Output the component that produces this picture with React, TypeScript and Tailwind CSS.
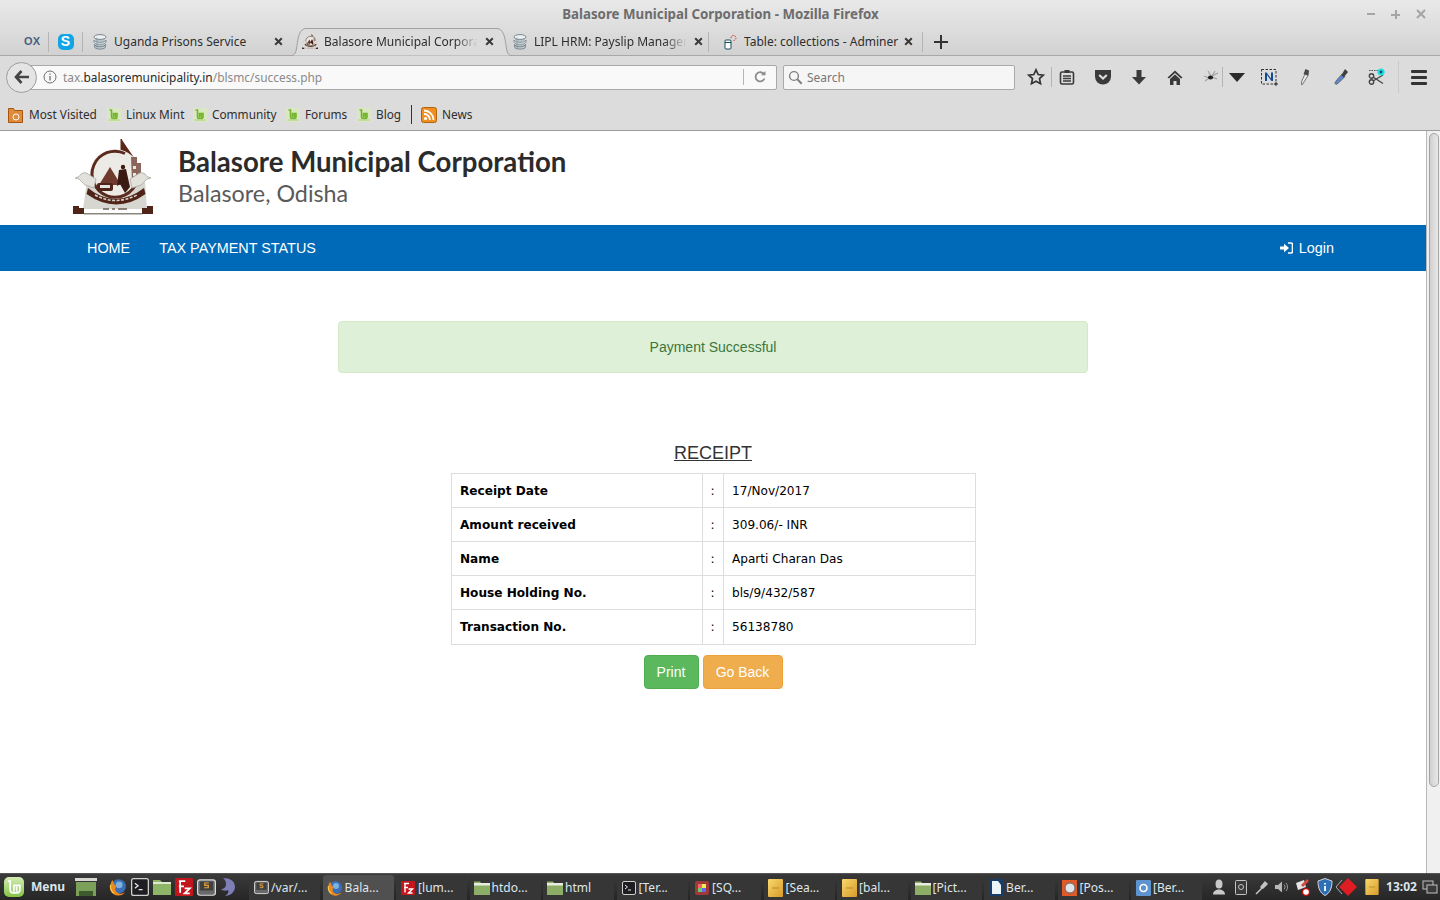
import React from "react";

const chrome = "font-['Noto_Sans',sans-serif]";
const arial = "font-['Liberation_Sans',Arial,sans-serif]";
const dejavu = "font-['DejaVu_Sans',sans-serif]";

const GlobeDb = () => (
  <svg width="16" height="16" viewBox="0 0 16 16">
    <path d="M3 3v10c0 1.200 2.200 2.200 5 2.200s5-1 5-2.200V3" fill="#b9c4ca" />
    <ellipse cx="8" cy="3" rx="6" ry="2.400" fill="#eef1f2" stroke="#77858c" />
    <path d="M2 6c0 1.300 2.700 2.400 6 2.400S14 7.300 14 6v2c0 1.300-2.700 2.400-6 2.400S2 9.300 2 8z" fill="#dce2e5" stroke="#77858c" strokeWidth=".8" />
    <path d="M2.500 10.500c0 1.300 2.500 2.300 5.500 2.300s5.500-1 5.500-2.300v2.300c0 1.300-2.500 2.300-5.500 2.300s-5.500-1-5.500-2.300z" fill="#c5ced3" stroke="#66757f" strokeWidth=".8" />
    <path d="M5 3.500v11" stroke="#5f7a8a" strokeWidth=".7" opacity=".6" />
  </svg>
);

const Crest = ({ size = 16 }: { size?: number }) => (
  <svg width={size} height={size * 0.95} viewBox="0 0 80 76" className="shrink-0">
    {/* body */}
    <path d="M14 42h58l2 28H10z" fill="#d8d6d1" />
    {/* flag */}
    <rect x="47.500" y="0" width="1.600" height="32" fill="#5a2a1e" />
    <path d="M49 1l15 22-15-6z" fill="#5b2418" />
    {/* disc */}
    <circle cx="42" cy="35" r="25" fill="#ecebe6" />
    <path d="M52 14.500A23 23 0 1 0 64 42" fill="none" stroke="#5b2a1f" strokeWidth="3" />
    <circle cx="42" cy="35" r="18" fill="none" stroke="#e9e8e3" strokeWidth="1.500" />
    <path d="M26 46l11-18 11 18z" fill="#6e3b2e" />
    <rect x="24" y="44" width="16" height="8" rx="2" fill="#4f2419" />
    <path d="M27 46h10v3H27z" fill="#e6e4de" />
    <circle cx="50" cy="28" r="2.200" fill="#3a1a12" />
    <path d="M46 31l7-1 4 18-5 6-5-9-3 2z" fill="#3a1a12" />
    <path d="M58 18h6v6h4v20h-9z" fill="#8a675c" />
    <path d="M60 27h3v3h-3zM60 34h3v3h-3z" fill="#e8e6e0" />
    {/* birds */}
    <path d="M2 39q5-1 6-4 4-3 7 0l8 5-2 9-9-3q-4-4-6-6z" fill="#e2e1da" stroke="#a9a79c" strokeWidth=".8" />
    <path d="M78 39q-5-1-6-4-4-3-7 0l-8 5 2 9 9-3q4-4 6-6z" fill="#e2e1da" stroke="#a9a79c" strokeWidth=".8" />
    {/* ribbon */}
    <path d="M15 49q27 22 56 0l1.500 6q-29 21-59 0z" fill="#4f2419" />
    <path d="M22 56q20 11 42 0" fill="none" stroke="#d8cfc8" strokeWidth="1.600" strokeDasharray="3 1.500" />
    {/* motto + base */}
    <path d="M30 70h6M39 70h3M45 70h9" stroke="#6b5d55" strokeWidth="1.600" />
    <path d="M0 67h6v2h5v6H0z" fill="#4f2419" />
    <path d="M80 67h-6v2h-5v6h11z" fill="#4f2419" />
    <rect x="11" y="74" width="58" height="1.500" fill="#8b8680" />
  </svg>
);

const CloseX = () => (
  <svg width="9" height="9" viewBox="0 0 9 9" className="shrink-0">
    <path d="M1.200 1.200l6.600 6.600M7.800 1.200L1.200 7.800" stroke="#3a3a3a" strokeWidth="2" />
  </svg>
);

const Sep = ({ h = "h-[20px]" }: { h?: string }) => <div className={`w-px shrink-0 bg-[#b4b4b4] ${h}`} />;

const Tab = ({ icon, title, fade, w, pl, pr = "" }: { icon: React.ReactNode; title: string; fade?: boolean; w: string; pl: string; pr?: string }) => (
  <div className={`flex h-full shrink-0 items-center ${w} ${pl} ${pr}`}>
    <div className="mr-[6px] flex w-4 shrink-0 justify-center">{icon}</div>
    <div
      className={`min-w-0 flex-1 overflow-hidden whitespace-nowrap pt-[1px] text-[12px] text-[#2e2e2e] ${fade ? "[mask-image:linear-gradient(90deg,black_85%,transparent)]" : ""}`}
    >
      {title}
    </div>
  </div>
);

const MintIcon = ({ size = 14 }: { size?: number }) => (
  <svg width={size} height={size} viewBox="0 0 14 14">
    <rect width="14" height="14" rx="1" fill="#d9e8c2" />
    <path d="M2.500 2h2v7a1.500 1.500 0 0 0 1.500 1.500h2.500A1.500 1.500 0 0 0 10 9V5.500H6.500v4M8.300 6v3.500" fill="none" stroke="#73b52a" strokeWidth="1.600" />
    <rect x="1.500" y="11.500" width="11" height="1" fill="#a9cf74" />
  </svg>
);

const Mark = ({ w, icon, label, gap = "gap-[5px]" }: { w: string; icon: React.ReactNode; label: string; gap?: string }) => (
  <div className={`flex shrink-0 items-center ${gap} ${w}`}>
    {icon}
    <span className="whitespace-nowrap text-[11.800px] text-[#2e2e2e]">{label}</span>
  </div>
);

const ToolIcon = ({ children }: { children: React.ReactNode }) => (
  <div className="flex h-[20px] w-[36px] shrink-0 items-center justify-center">{children}</div>
);

const FolderIcon = () => (
  <svg width="16" height="15" viewBox="0 0 16 15">
    <path d="M0 1.500h6l1 1.500h9v12H0z" fill="#8cae66" />
    <rect y="3" width="16" height="2.500" fill="#e8ecdf" />
  </svg>
);

const StickyIcon = ({ w = 15, h = 18 }: { w?: number; h?: number }) => (
  <svg width={w} height={h} viewBox="0 0 15 18">
    <defs>
      <linearGradient id="stk" x1="0" y1="0" x2="1" y2="1">
        <stop offset="0" stopColor="#f9d96b" />
        <stop offset="1" stopColor="#d99a2b" />
      </linearGradient>
    </defs>
    <rect width="15" height="18" rx="1" fill="url(#stk)" />
    <path d="M4 9h7" stroke="#a8822a" strokeWidth=".8" />
  </svg>
);

const FoxIcon = ({ size = 16 }: { size?: number }) => (
  <svg width={size} height={size} viewBox="0 0 16 16">
    <circle cx="8.500" cy="7.500" r="6.500" fill="#3a6fb7" />
    <circle cx="9" cy="6" r="3" fill="#7fb1e0" />
    <path d="M3 1.500C1 5 0 10 3 13.500c3 3 9 3 11.500-1-2 1.500-5 2-7 .5C5 11.500 5 8.500 7 7.500 5.500 7 4 5 3 1.500z" fill="#ea8a1f" />
    <path d="M1.500 6c-.5 3 .5 6 3 7.500" fill="none" stroke="#f7c547" strokeWidth="1.200" />
  </svg>
);

const TermIcon = ({ size = 14 }: { size?: number }) => (
  <svg width={size} height={size} viewBox="0 0 14 14">
    <rect x=".5" y=".5" width="13" height="13" rx="1.500" fill="#1d1d22" stroke="#cfcfcf" />
    <path d="M3 4l2.500 2L3 8M6 9h3" stroke="#e8e8e8" fill="none" />
  </svg>
);

const FzIcon = ({ size = 14 }: { size?: number }) => (
  <svg width={size} height={size} viewBox="0 0 14 14">
    <rect width="14" height="14" rx="1" fill="#c1161c" />
    <path d="M3 2.500h5M4 2.500v9M3 6.500h4M7.500 8h4L7.500 12h4" stroke="#fff" strokeWidth="1.400" fill="none" />
  </svg>
);

const SublimeIcon = ({ size = 16 }: { size?: number }) => (
  <svg width={size} height={size} viewBox="0 0 16 16">
    <rect x=".5" y="1.500" width="15" height="13" rx="2" fill="#6a6a6a" stroke="#dcdcdc" />
    <rect x="2.500" y="3" width="11" height="7.500" fill="#404040" />
    <path d="M10 4.200H6.500v2H9.500v2H6" stroke="#e9a23b" fill="none" />
  </svg>
);

const TaskBtn = ({ icon, label, active }: { icon: React.ReactNode; label: string; active?: boolean }) => (
  <div
    className={`flex h-[25px] w-[71px] shrink-0 items-center gap-[2px] rounded-t-[3px] pl-[4px] ${active ? "bg-[#505050]" : "bg-[#363636]"}`}
  >
    <div className="flex w-[16px] shrink-0 justify-center">{icon}</div>
    <span className="whitespace-nowrap text-[12px] text-[#dfe6ec]">{label}</span>
  </div>
);

const rows = [
  ["Receipt Date", "17/Nov/2017"],
  ["Amount received", "309.06/- INR"],
  ["Name", "Aparti Charan Das"],
  ["House Holding No.", "bls/9/432/587"],
  ["Transaction No.", "56138780"],
];

export default function App() {
  return (
    <div className={`flex h-[900px] w-[1440px] flex-col overflow-hidden bg-white ${chrome}`}>
      {/* titlebar + tabs */}
      <div className="h-[56px] shrink-0 border-b border-[#a8a8a8] bg-gradient-to-b from-[#e9e9e9] to-[#d2d2d2]">
        <div className="flex h-[28px] items-center pr-[14px]">
          <div className="w-[1361px] pl-[80px] pt-[2px] text-center text-[13.300px] font-bold text-[#6d6d6d]">Balasore Municipal Corporation - Mozilla Firefox</div>
          <div className="flex flex-1 items-center justify-between pl-[6px]">
            <div className="h-[2px] w-[8px] bg-[#a5a5a5]" />
            <div className="relative h-[9px] w-[9px]">
              <div className="absolute top-[4px] h-[2px] w-[9px] bg-[#a5a5a5]" />
              <div className="absolute left-[4px] h-[9px] w-[2px] bg-[#a5a5a5]" />
            </div>
            <svg width="10" height="10" viewBox="0 0 10 10">
              <path d="M1 1l8 8M9 1l-8 8" stroke="#a5a5a5" strokeWidth="2" />
            </svg>
          </div>
        </div>
        <div className="flex h-[27px] items-center">
          <div className={`flex w-[48px] shrink-0 justify-end pr-[8px] ${arial} text-[11px] font-bold text-[#46617f]`}>OX</div>
          <Sep />
          <div className="flex w-[33px] shrink-0 justify-center">
            <div className={`flex h-[16px] w-[16px] items-center justify-center rounded-[5px] bg-[#12a5e6] ${arial} text-[14px] font-bold text-white`}>S</div>
          </div>
          <Sep />
          <div className="flex h-full w-[208px] shrink-0 items-center">
            <Tab icon={<GlobeDb />} title="Uganda Prisons Service" w="w-[191px]" pl="pl-[9px]" />
            <CloseX />
          </div>
          <div className="relative flex h-full w-[214px] shrink-0 items-center">
            <svg className="absolute left-0 -top-[1px]" width="221" height="29" viewBox="0 0 221 29">
              <path d="M0 28.500c4 0 5-3 6-10 1-9 3-17 9-17h191c6 0 8 8 9 17 1 7 2 10 6 10" fill="#dcdcdc" stroke="#a0a0a0" />
            </svg>
            <div className="relative flex h-full w-full items-center">
              <Tab icon={<Crest />} title="Balasore Municipal Corporation" fade w="w-[194px]" pl="pl-[11px]" pr="pr-[7px]" />
              <CloseX />
            </div>
          </div>
          <div className="relative flex h-full w-[203px] shrink-0 items-center">
            <Tab icon={<GlobeDb />} title="LIPL HRM: Payslip Management" fade w="w-[189px]" pl="pl-[7px]" pr="pr-[7px]" />
            <CloseX />
          </div>
          <Sep />
          <div className="flex h-full w-[213px] shrink-0 items-center">
            <Tab
              icon={
                <svg width="16" height="16" viewBox="0 0 16 16">
                  <rect x="3" y="6" width="6" height="9" rx="1" fill="#fff" stroke="#164f5a" />
                  <path d="M3 8.500h6" stroke="#164f5a" />
                  <path d="M9 4a2.500 2.500 0 1 1 5 0c0 1.500-2 1.500-2 3" fill="none" stroke="#d22" strokeDasharray="1.500 1" />
                </svg>
              }
              title="Table: collections - Adminer"
              w="w-[195px]"
              pl="pl-[13px]"
            />
            <CloseX />
          </div>
          <Sep />
          <div className="relative ml-[11px] h-[14px] w-[14px]">
            <div className="absolute top-[6px] h-[2px] w-[14px] bg-[#333]" />
            <div className="absolute left-[6px] h-[14px] w-[2px] bg-[#333]" />
          </div>
        </div>
      </div>

      {/* nav + bookmarks */}
      <div className="h-[75px] shrink-0 border-b border-[#9c9c9c] bg-[#dcdcdc]">
        <div className="flex h-[39px] items-center pt-[3px]">
          <div className="relative ml-[22px] flex h-[25px] w-[755px] shrink-0 items-center rounded-r-[2px] border border-[#a9a9a9] bg-[#f9f9f9] pl-[20px] pr-[9px]">
            <div className="absolute left-[-17px] top-[-4px] flex h-[31px] w-[31px] items-center justify-center rounded-full border border-[#9e9e9e] bg-[#e4e4e4]">
              <svg width="16" height="14" viewBox="0 0 16 14">
                <path d="M7.500 1L2 7l5.500 6M2.500 7H15" stroke="#444" strokeWidth="2.600" fill="none" />
              </svg>
            </div>
            <svg width="14" height="14" viewBox="0 0 14 14" className="mr-[6px] shrink-0">
              <circle cx="7" cy="7" r="6" fill="none" stroke="#707070" />
              <path d="M7 6v4.500M7 3.400v1.400" stroke="#707070" strokeWidth="1.300" />
            </svg>
            <span className="flex-1 whitespace-nowrap pt-[1px] text-[11.900px] text-[#8a8a8a]">
              tax.<span className="text-[#2a2a2a]">balasoremunicipality.in</span>/blsmc/success.php
            </span>
            <div className="h-[16px] w-px bg-[#b5b5b5]" />
            <svg width="14" height="14" viewBox="0 0 14 14" className="ml-[9px]">
              <path d="M11 4.200A4.600 4.600 0 1 0 11.500 8.500" fill="none" stroke="#8c8c8c" strokeWidth="1.800" />
              <path d="M8 5.200h4.500V1z" fill="#8c8c8c" />
            </svg>
          </div>
          <div className="ml-[6px] flex h-[25px] w-[232px] shrink-0 items-center gap-[4px] rounded-[2px] border border-[#a9a9a9] bg-[#f6f6f6] pl-[4px]">
            <svg width="15" height="15" viewBox="0 0 15 15">
              <circle cx="6" cy="6" r="4.400" fill="none" stroke="#7f7f7f" strokeWidth="1.400" />
              <path d="M9.300 9.300l4.400 4.400" stroke="#7f7f7f" strokeWidth="2" />
            </svg>
            <span className="pt-[1px] text-[12px] text-[#777]">Search</span>
          </div>
          <div className="ml-[3px] flex h-[36px] items-center">
            <ToolIcon>
              <svg width="18" height="18" viewBox="0 0 18 18">
                <path d="M9 1.800l2.200 4.700 5.100.6-3.800 3.500 1 5.100L9 13.200l-4.500 2.500 1-5.100-3.800-3.500 5.100-.6z" fill="none" stroke="#333" strokeWidth="1.700" />
              </svg>
            </ToolIcon>
            <div className="-ml-[3px] mr-[-3px]"><Sep /></div>
            <ToolIcon>
              <svg width="16" height="16" viewBox="0 0 16 16">
                <rect x="1.500" y="3" width="13" height="12" rx="1.500" fill="none" stroke="#3a3a3a" strokeWidth="1.600" />
                <rect x="5.500" y="1" width="5" height="3" fill="#3a3a3a" />
                <path d="M4 7h8M4 9.500h8M4 12h8" stroke="#3a3a3a" strokeWidth="1.400" />
              </svg>
            </ToolIcon>
            <ToolIcon>
              <svg width="18" height="16" viewBox="0 0 18 16">
                <path d="M1 1h16v6.500a8 8 0 0 1-16 0z" fill="#3a3a3a" />
                <path d="M5.200 6L9 9.600 12.800 6" fill="none" stroke="#dcdcdc" strokeWidth="2.200" />
              </svg>
            </ToolIcon>
            <ToolIcon>
              <svg width="16" height="16" viewBox="0 0 16 16">
                <path d="M5.500 1h5v7H15l-7 7.500L1 8h4.500z" fill="#3a3a3a" />
              </svg>
            </ToolIcon>
            <ToolIcon>
              <svg width="16" height="15" viewBox="0 0 16 15">
                <path d="M8 .5L.5 7.500 2 8.600 8 3l6 5.600 1.500-1.100z" fill="#3a3a3a" />
                <path d="M3 9l5-4.500L13 9v6H9.500v-4h-3v4H3z" fill="#3a3a3a" />
              </svg>
            </ToolIcon>
            <ToolIcon>
              <svg width="16" height="14" viewBox="0 0 16 14">
                <path d="M1 6l5 2M2 11l4-3M15 3L9 6M14 9L9 7M5 1l3 5M12 1L9 6" stroke="#a2a2a2" strokeWidth="1.100" />
                <ellipse cx="7.500" cy="7.500" rx="2.600" ry="2" fill="#222" />
              </svg>
            </ToolIcon>
            <div className="-ml-[7px]"><Sep /></div>
            <div className="flex w-[28px] shrink-0 justify-center">
              <svg width="16" height="9" viewBox="0 0 16 9">
                <path d="M0 0h16L8 9z" fill="#2b2b2b" />
              </svg>
            </div>
            <ToolIcon>
              <svg width="17" height="17" viewBox="0 0 17 17">
                <rect x=".5" y=".5" width="14.500" height="14.500" fill="none" stroke="#333" strokeDasharray="2.500 1.500" />
                <path d="M4 12V3.500h1.600L10 9.500V3.500h2V12h-1.600L6 6v6z" fill="#124a94" />
                <path d="M13 15h4M15 13v4" stroke="#333" />
              </svg>
            </ToolIcon>
            <ToolIcon>
              <svg width="14" height="18" viewBox="0 0 14 18">
                <path d="M7 6l3 1.500-4 6.500-2 3-.5-.3.2-3.500z" fill="#e9e9e9" stroke="#777" />
                <path d="M5.500 6L7.500 1l3.500 1.500-.5 5z" fill="#4a4a4a" />
              </svg>
            </ToolIcon>
            <ToolIcon>
              <svg width="16" height="18" viewBox="0 0 16 18">
                <path d="M9 6l3 2.500-6 6L3 16.500l-1.200-1.200L3 13z" fill="#5a86d6" stroke="#6b6b6b" />
                <path d="M8.500 7l3.500-6 3 3-4.500 5.500z" fill="#3f3f3f" />
              </svg>
            </ToolIcon>
            <ToolIcon>
              <svg width="18" height="18" viewBox="0 0 18 18">
                <circle cx="3.500" cy="14" r="2.200" fill="none" stroke="#444" strokeWidth="1.400" />
                <circle cx="3.500" cy="8" r="2.200" fill="none" stroke="#444" strokeWidth="1.400" />
                <path d="M5 13L15 7M5 9l10 6.500" stroke="#444" strokeWidth="1.300" />
                <path d="M1 2.500h9" stroke="#555" strokeDasharray="1.500 1" />
                <circle cx="13" cy="4" r="3.600" fill="#20e0e6" />
                <circle cx="13" cy="4" r="1.400" fill="#1b4a6b" />
              </svg>
            </ToolIcon>
            <div className="ml-[3px] h-[32px] w-px bg-[#cacaca]" />
            <div className="ml-[12px] flex w-[16px] flex-col gap-[3px]">
              <div className="h-[3px] rounded-[1px] bg-[#333]" />
              <div className="h-[3px] rounded-[1px] bg-[#333]" />
              <div className="h-[3px] rounded-[1px] bg-[#333]" />
            </div>
          </div>
        </div>
        <div className="flex h-[35px] items-center pl-[8px] pt-[4px]">
          <Mark
            w="w-[99px]"
            gap="gap-[6px]"
            icon={
              <svg width="15" height="16" viewBox="0 0 15 16">
                <path d="M.5 1.500h5l1 2h8v12H.5z" fill="#e08a3c" stroke="#a8560f" />
                <circle cx="8" cy="10" r="3" fill="none" stroke="#fff" />
              </svg>
            }
            label="Most Visited"
          />
          <Mark w="w-[86px]" icon={<MintIcon />} label="Linux Mint" />
          <Mark w="w-[93px]" icon={<MintIcon />} label="Community" />
          <Mark w="w-[71px]" icon={<MintIcon />} label="Forums" />
          <Mark w="w-[54px]" icon={<MintIcon />} label="Blog" />
          <div className="h-[19px] w-px bg-[#333]" />
          <div className="ml-[9px]">
            <Mark
              w="w-[60px]"
              icon={
                <svg width="16" height="16" viewBox="0 0 16 16">
                  <rect x=".5" y=".5" width="15" height="15" rx="2" fill="#ee8f22" stroke="#b4620e" />
                  <circle cx="4.500" cy="11.500" r="1.600" fill="#fff" />
                  <path d="M3 7a6 6 0 0 1 6 6M3 3.500A9.500 9.500 0 0 1 12.500 13" fill="none" stroke="#fff" strokeWidth="1.800" />
                </svg>
              }
              label="News"
            />
          </div>
        </div>
      </div>

      {/* page */}
      <div className="flex min-h-0 flex-1">
        <div className={`min-w-0 flex-1 ${arial}`}>
          <div className="flex h-[94px] items-start pl-[73px] pt-[8px]">
            <Crest size={80} />
            <div className="ml-[25px] font-['Lato',sans-serif]">
              <div className="mt-[5px] text-[27.600px] font-bold leading-[35px] text-[#2b2b2b]">Balasore Municipal Corporation</div>
              <div className="text-[23.300px] leading-[28px] text-[#5a5a5a]">Balasore, Odisha</div>
            </div>
          </div>
          <div className="flex h-[46px] items-center bg-[#0069b8] pl-[87px] pr-[92px] pt-[1px] text-[14.400px] text-white">
            <span>HOME</span>
            <span className="ml-[29px]">TAX PAYMENT STATUS</span>
            <div className="ml-auto flex items-center gap-[6px]">
              <svg width="13" height="12" viewBox="0 0 13 12">
                <path d="M8 1h3a1.500 1.500 0 0 1 1.500 1.500v7A1.500 1.500 0 0 1 11 11H8" fill="none" stroke="#fff" strokeWidth="1.600" />
                <path d="M0 4.500h4V1.800L9 6l-5 4.200V7.500H0z" fill="#fff" />
              </svg>
              <span>Login</span>
            </div>
          </div>
          <div className="mx-auto mt-[50px] flex h-[52px] w-[750px] items-center justify-center rounded-[4px] border border-[#d6e9c6] bg-[#dff0d8] text-[14px] text-[#3c763d]">
            Payment Successful
          </div>
          <h1 className="mt-[68px] text-center text-[18px] leading-[24px] text-[#333] underline">RECEIPT</h1>
          <table className={`mx-auto mt-[8px] w-[525px] table-fixed border-collapse text-[12.100px] text-black ${dejavu}`}>
            <colgroup>
              <col className="w-[251px]" />
              <col className="w-[21px]" />
              <col />
            </colgroup>
            <tbody>
              {rows.map(([k, v], i) => (
                <tr key={k} className={i === 4 ? "h-[35px]" : "h-[34px]"}>
                  <td className={`border border-[#dddddd] px-[8.500px] font-bold ${i === 4 ? "" : "pt-[1px]"}`}>{k}</td>
                  <td className={`border border-[#dddddd] text-center ${i === 4 ? "" : "pt-[1px]"}`}>:</td>
                  <td className={`border border-[#dddddd] px-[8.500px] ${i === 4 ? "" : "pt-[1px]"}`}>{v}</td>
                </tr>
              ))}
            </tbody>
          </table>
          <div className="mt-[10px] flex justify-center gap-[4px] text-[14px] text-white">
            <div className="flex h-[34px] w-[55px] items-center justify-center rounded-[4px] border border-[#4cae4c] bg-[#5cb85c]">Print</div>
            <div className="flex h-[34px] w-[80px] items-center justify-center rounded-[4px] border border-[#eea236] bg-[#f0ad4e]">Go Back</div>
          </div>
        </div>
        <div className="w-[14px] shrink-0 border-l border-[#b8b8b8] bg-[#f0f0f0] pt-[2px]">
          <div className="mx-auto h-[654px] w-[10px] rounded-[5px] border border-[#a4a4a4] bg-gradient-to-r from-[#d0d0d0] to-[#e8e8e8]" />
        </div>
      </div>

      {/* mint panel */}
      <div className="flex h-[27px] shrink-0 items-end border-t border-[#555] bg-gradient-to-b from-[#3a3a3a] to-[#262626]">
        <div className="flex h-[26px] items-center">
          <div className="ml-[4px] flex h-[20px] w-[20px] items-center justify-center rounded-[5px] bg-gradient-to-b from-[#d5edb2] to-[#86c343]">
            <svg width="15" height="15" viewBox="0 0 14 14">
              <path d="M1 1h2v8a3 3 0 0 0 3 3h3a3 3 0 0 0 3-3V5H6.500v6M9 6v5" fill="none" stroke="#fff" strokeWidth="1.600" />
            </svg>
          </div>
          <span className="ml-[7px] text-[12px] font-bold text-[#dce5ec]">Menu</span>
          <div className="ml-[10px] flex h-[18px] w-[22px] flex-col">
            <div className="h-[3px] bg-[#d5d8cf]" />
            <div className="mx-[1px] mt-[1px] flex flex-1 items-end justify-center bg-[#7ba05a]">
              <div className="h-[5px] w-[14px] bg-[#3f5a2f]" />
            </div>
          </div>
          <div className="ml-[12px] flex items-center gap-[4px]">
            <FoxIcon size={18} />
            <TermIcon size={18} />
            <svg width="18" height="16" viewBox="0 0 18 16">
              <path d="M0 1h7l2 2h9v13H0z" fill="#8fb568" />
              <rect y="3" width="18" height="2" fill="#dfe8d2" />
            </svg>
            <FzIcon size={18} />
            <SublimeIcon size={19} />
            <svg width="18" height="20" viewBox="0 0 18 20">
              <path d="M3 1c7 0 12 3 12 9 0 5-5 9-10 9 3-2 4-4 3-6-2 1-5 1-7-1 3 0 5-2 5-5 0-3-1-4-3-6z" fill="#7f7fb8" />
            </svg>
          </div>
          <div className="ml-[11px] flex h-[26px] items-end gap-[2.500px]">
            <TaskBtn icon={<SublimeIcon size={15} />} label="/var/..." />
            <TaskBtn icon={<FoxIcon />} label="Bala..." active />
            <TaskBtn icon={<FzIcon />} label="[lum..." />
            <TaskBtn icon={<FolderIcon />} label="htdo..." />
            <TaskBtn icon={<FolderIcon />} label="html" />
            <TaskBtn icon={<TermIcon />} label="[Ter..." />
            <TaskBtn
              icon={
                <svg width="14" height="14" viewBox="0 0 14 14">
                  <rect width="14" height="14" rx="2" fill="#a03a3a" />
                  <rect x="3" y="3" width="4" height="4" fill="#e66" />
                  <rect x="7" y="3" width="4" height="4" fill="#ee5" />
                  <rect x="3" y="7" width="4" height="4" fill="#6c6" />
                  <rect x="7" y="7" width="4" height="4" fill="#66e" />
                </svg>
              }
              label="[SQ..."
            />
            <TaskBtn icon={<StickyIcon />} label="[Sea..." />
            <TaskBtn icon={<StickyIcon />} label="[bal..." />
            <TaskBtn icon={<FolderIcon />} label="[Pict..." />
            <TaskBtn
              icon={
                <svg width="15" height="17" viewBox="0 0 15 17">
                  <rect width="15" height="17" rx="1" fill="#173e66" />
                  <path d="M3 2h6l3 4v9H3z" fill="#eef3f8" />
                </svg>
              }
              label="Ber..."
            />
            <TaskBtn
              icon={
                <svg width="15" height="16" viewBox="0 0 15 16">
                  <rect width="15" height="16" fill="#e0592a" />
                  <circle cx="8" cy="8" r="5" fill="#dfe4e8" stroke="#666" />
                </svg>
              }
              label="[Pos..."
            />
            <TaskBtn
              icon={
                <svg width="15" height="16" viewBox="0 0 15 16">
                  <rect width="15" height="16" rx="1" fill="#5d93cf" />
                  <circle cx="7.500" cy="8" r="3.500" fill="none" stroke="#fff" strokeWidth="1.600" />
                </svg>
              }
              label="[Ber..."
            />
          </div>
          {/* tray */}
          <div className="ml-[6px] flex items-center">
            <div className="flex w-[22px] justify-center">
              <svg width="14" height="16" viewBox="0 0 14 16">
                <ellipse cx="7" cy="5" rx="3.500" ry="4.500" fill="#c9c9c9" />
                <path d="M1 15.500c0-3 2-4 4.500-5h3c2.500 1 4.500 2 4.500 5z" fill="#c9c9c9" />
              </svg>
            </div>
            <div className="flex w-[22px] justify-center">
              <svg width="12" height="15" viewBox="0 0 12 15">
                <rect x=".5" y=".5" width="11" height="14" rx="1" fill="#3a3a3a" stroke="#c4c4c4" />
                <circle cx="6" cy="7" r="2.500" fill="none" stroke="#c4c4c4" />
              </svg>
            </div>
            <div className="flex w-[20px] justify-center">
              <svg width="14" height="15" viewBox="0 0 14 15">
                <path d="M1 14L7 8M7 8l-1-1 4-5 2 2-4 4z" stroke="#c4c4c4" strokeWidth="1.500" fill="#c4c4c4" />
              </svg>
            </div>
            <div className="flex w-[19px] justify-center">
              <svg width="15" height="14" viewBox="0 0 15 14">
                <path d="M1 5h3l4-3.500v11L4 9H1z" fill="#b8b8b8" />
                <path d="M10 4.500a3.500 3.500 0 0 1 0 5M12 3a6 6 0 0 1 0 8" fill="none" stroke="#9a9a9a" />
              </svg>
            </div>
            <div className="flex w-[24px] justify-center">
              <svg width="18" height="19" viewBox="0 0 18 19">
                <path d="M2 5l8-3 2 7-8 3z" fill="#e6e6e6" />
                <path d="M13 1l2 2-6 6-2-2z" fill="#d24a3a" />
                <circle cx="12" cy="14" r="3.500" fill="#fff" stroke="#b11" strokeWidth="1.400" />
              </svg>
            </div>
            <div className="flex w-[20px] justify-center">
              <svg width="16" height="18" viewBox="0 0 16 18">
                <path d="M8 .5l7 2.500c0 7-2 12-7 14.500C3 15 1 10 1 3z" fill="#2f6fb5" stroke="#d6d6d6" />
                <path d="M8 5v1.600M8 8v5" stroke="#fff" strokeWidth="1.800" />
              </svg>
            </div>
            <div className="flex w-[24px] justify-center">
              <svg width="22" height="20" viewBox="0 0 22 20">
                <path d="M12 1l9 9-9 9-9-9z" fill="#de1c24" />
                <path d="M6 3l-6 7 6 7" fill="none" stroke="#b0b0b0" />
              </svg>
            </div>
            <div className="ml-[3px] flex w-[19px] justify-center">
              <StickyIcon w={16} h={16} />
            </div>
            <span className="ml-[5px] text-[12px] font-bold text-[#dce5ec]">13:02</span>
            <svg width="16" height="14" viewBox="0 0 16 14" className="ml-[5px]">
              <rect x="1" y="1" width="10" height="8" fill="#3a3a3a" stroke="#c0c0c0" />
              <rect x="5" y="5" width="10" height="8" fill="#3a3a3a" stroke="#c0c0c0" />
            </svg>
          </div>
        </div>
      </div>
    </div>
  );
}
